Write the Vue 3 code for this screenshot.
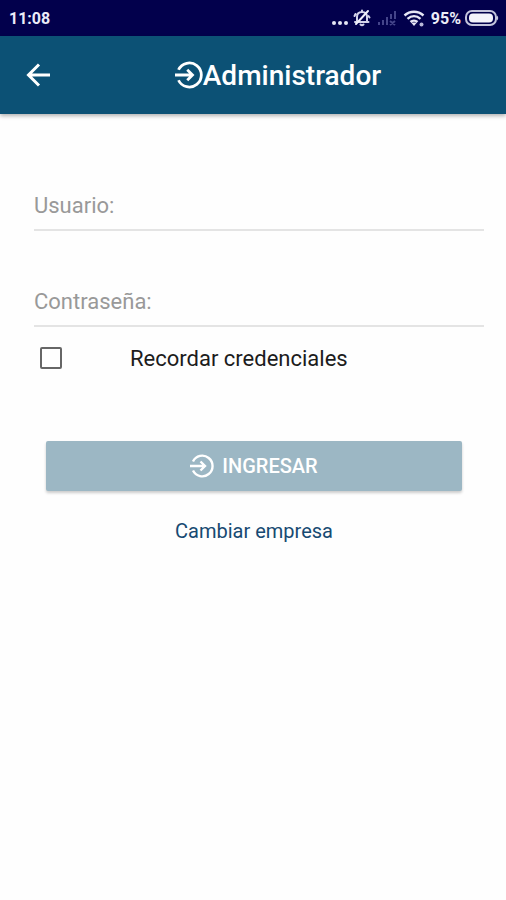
<template>
    <div class="page">
        <div class="status-bar">
            <span class="time">11:08</span>
            <div class="status-icons">
                <svg width="18" height="18" viewBox="0 0 18 18" fill="#e6e6f5">
                    <circle cx="3" cy="14" r="2" />
                    <circle cx="9" cy="14" r="2" />
                    <circle cx="15" cy="14" r="2" />
                </svg>
                <svg class="bell" width="18" height="18" viewBox="0 0 18 18" fill="none" stroke="#d4d4ea" stroke-width="2" stroke-linecap="round" stroke-linejoin="round">
                    <path d="M2 13h13.500M4 12V8c0-3 2-5 5-5s5 2 5 5v4M7.500 15.500c1 1 2 1 3 0M9 1.500V3M2.500 5 1.500 7M15.500 7l1 1.500" />
                    <path d="M3 15 15 2" stroke="#f0f0fa" />
                </svg>
                <svg class="signal" width="20" height="18" viewBox="0 0 20 18" fill="none" stroke="#44448a" stroke-width="2">
                    <path d="M2 16v-3M6 16v-5M10 16V8M14 10V5M18 10V2M13 12l5 4M18 12l-5 4" />
                </svg>
                <svg class="wifi" width="22" height="18" viewBox="0 0 22 18" fill="none" stroke="#e6e6f5" stroke-width="2.400">
                    <path d="M1.500 6.500c5.500-5 13.500-5 19 0M4.500 9.800c4-3.500 9-3.500 13 0M7.500 13c2-1.800 5-1.800 7 0" />
                    <path d="M8 13.500h6L11 17z" fill="#e6e6f5" stroke="none" />
                    <circle cx="18.500" cy="15.500" r="2" fill="#b8b8d8" stroke="none" />
                </svg>
                <span class="percent">95%</span>
                <svg class="battery" width="34" height="16" viewBox="0 0 34 16">
                    <rect x="1" y="1" width="30" height="14" rx="6" fill="none" stroke="#c4c4dc" stroke-width="2" />
                    <rect x="4" y="3.500" width="24" height="9" rx="4" fill="#f4f4fb" />
                    <path d="M32 5.500c1.600 1 1.600 4 0 5z" fill="#c4c4dc" />
                </svg>
            </div>
        </div>

        <header class="toolbar">
            <button class="back" type="button" aria-label="Volver">
                <svg width="24" height="24" viewBox="0 0 24 24" fill="none" stroke="#fff" stroke-width="3">
                    <path d="M24 12H2.500M13 1.500 2.500 12 13 22.500" />
                </svg>
            </button>
            <h1 class="title">
                <svg width="28" height="28" viewBox="0 0 24 24" fill="none" stroke="#fff" stroke-width="2.400">
                    <path d="M3 7.500A10.300 10.300 0 1 1 3 16.500M0 12h15M10.500 7.500 15 12l-4.500 4.500" />
                </svg>
                <span>Administrador</span>
            </h1>
        </header>

        <!-- 登录表单 -->
        <form class="login" @submit.prevent>
            <input class="field" v-model="usuario" type="text" placeholder="Usuario:" aria-label="Usuario" />
            <input class="field" v-model="clave" type="password" placeholder="Contraseña:" aria-label="Contraseña" />

            <div class="remember">
                <input id="recordar" v-model="recordar" type="checkbox" />
                <label for="recordar">Recordar credenciales</label>
            </div>

            <button class="submit" type="submit" :disabled="!usuario || !clave">
                <svg width="24" height="24" viewBox="0 0 24 24" fill="none" stroke="#fff" stroke-width="2.400">
                    <path d="M3 7.500A10.300 10.300 0 1 1 3 16.500M0 12h15M10.500 7.500 15 12l-4.500 4.500" />
                </svg>
                <span>INGRESAR</span>
            </button>

            <a class="change" href="#">Cambiar empresa</a>
        </form>
    </div>
</template>

<script setup>
    import { ref } from 'vue'

    const usuario = ref('')
    const clave = ref('')
    const recordar = ref(false)
</script>

<style>
    body {
        margin: 0;
        background: #fefefe;
    }
</style>

<style scoped>
    .page {
        min-height: 100vh;
        font-family: Roboto, "Liberation Sans", sans-serif;
        color: #1c1c1c;
    }

    .page * {
        box-sizing: border-box;
    }

    .status-bar {
        display: flex;
        align-items: center;
        justify-content: space-between;
        height: 36px;
        padding: 0 7px 0 9px;
        background: #02004c;
        color: #ececf8;
        font-size: 16px;
        font-weight: 700;
    }

    .status-icons {
        display: flex;
        align-items: center;
    }

    .bell {
        margin-left: 4px;
    }

    .signal {
        margin-left: 6px;
    }

    .wifi {
        margin-left: 6px;
    }

    .percent {
        margin: 0 4px 0 6px;
    }

    .toolbar {
        display: grid;
        grid-template-columns: 48px 1fr;
        align-items: center;
        height: 78px;
        padding: 0 12px 0 14px;
        background: #0c5175;
        box-shadow: 0 2px 4px rgba(0, 0, 0, 0.3); /* 底部阴影 */
    }

    .back {
        display: flex;
        align-items: center;
        justify-content: center;
        height: 48px;
        padding: 0;
        border: 0;
        background: none;
    }

    .title {
        display: flex;
        align-items: center;
        justify-content: center;
        margin: 0;
        color: #fff;
        font-size: 28px;
        font-weight: 500;
    }

    .login {
        display: flex;
        flex-direction: column;
        padding: 68px 22px 0 34px;
    }

    .field {
        width: 100%;
        height: 49px;
        margin-bottom: 47px;
        padding: 0;
        border: 0;
        border-bottom: 2px solid #e4e4e4;
        border-radius: 0;
        outline: none;
        background: none;
        color: #1c1c1c;
        font-family: inherit;
        font-size: 22px;
    }

    .field::placeholder {
        color: #999;
        opacity: 1;
    }

    .field + .field {
        margin-bottom: 0;
    }

    .remember {
        display: flex;
        align-items: center;
        gap: 68px;
        height: 62px;
        padding-left: 6px;
        font-size: 22px;
    }

    .remember input {
        appearance: none;
        width: 22px;
        height: 22px;
        margin: 0;
        border: 2px solid #666;
        border-radius: 2px;
    }

    .remember input:checked {
        background: #0c5175;
    }

    .submit {
        display: flex;
        align-items: center;
        justify-content: center;
        gap: 8px;
        height: 50px;
        margin: 52px 22px 0 12px;
        padding: 0;
        border: 0;
        border-radius: 2px;
        background: #0c5175;
        box-shadow: 0 2px 3px rgba(0, 0, 0, 0.5);
        color: #fff;
        font-family: inherit;
        font-size: 20px;
        font-weight: 500;
    }

    .submit:disabled {
        background: #9cb7c4; /* 未填写时变淡 */
        box-shadow: 0 2px 3px rgba(0, 0, 0, 0.2);
    }

    .change {
        align-self: center;
        margin: 28px 10px 0 0;
        color: #174a72;
        font-size: 20px;
        line-height: 24px;
        text-decoration: none;
    }
</style>
